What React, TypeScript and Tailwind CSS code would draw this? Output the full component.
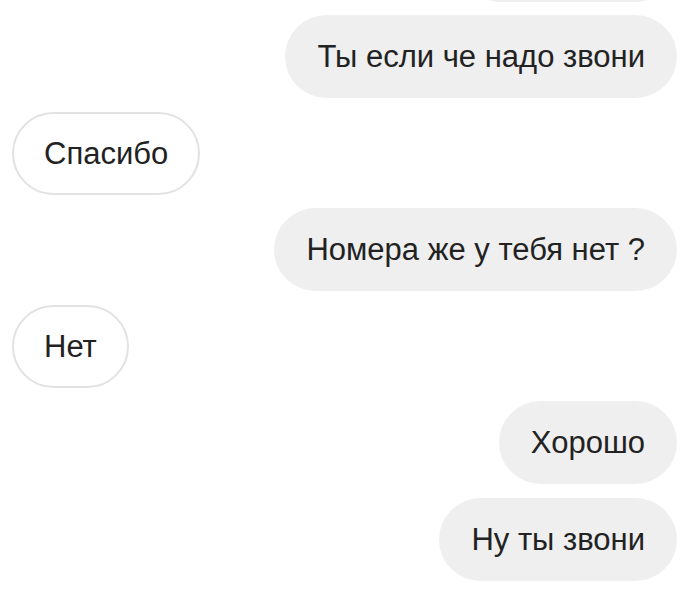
type Message = {
  text: string;
  mine: boolean;
};

const messages: Message[] = [
  { text: 'Ты если че надо звони', mine: true },
  { text: 'Спасибо', mine: false },
  { text: 'Номера же у тебя нет ?', mine: true },
  { text: 'Нет', mine: false },
  { text: 'Хорошо', mine: true },
  { text: 'Ну ты звони', mine: true }
];

const Bubble = ({ text, mine }: Message) => (
  <div className={`flex ${mine ? 'justify-end' : 'justify-start'}`}>
    <div
      className={`flex h-[83px] items-center rounded-full leading-none whitespace-nowrap ${
        mine ? 'bg-[#efefef] px-8' : 'border-2 border-[#e2e2e2] bg-white px-[30px]'
      }`}
    >
      {text}
    </div>
  </div>
);

export default function App() {
  return (
    <div className="h-[590px] w-full overflow-hidden bg-white font-['Liberation_Sans',Arial,sans-serif] text-[31px] text-[#222222]">
      <div className="flex flex-col gap-[13.5px] pl-3 pr-[15px]">
        {/* previous message, mostly scrolled out of view */}
        <div className="-mt-[81.5px] flex justify-end">
          <div className="h-[83px] w-[218px] rounded-full bg-[#efefef]" />
        </div>
        {messages.map((m, i) => (
          <Bubble key={i} text={m.text} mine={m.mine} />
        ))}
      </div>
    </div>
  );
}
